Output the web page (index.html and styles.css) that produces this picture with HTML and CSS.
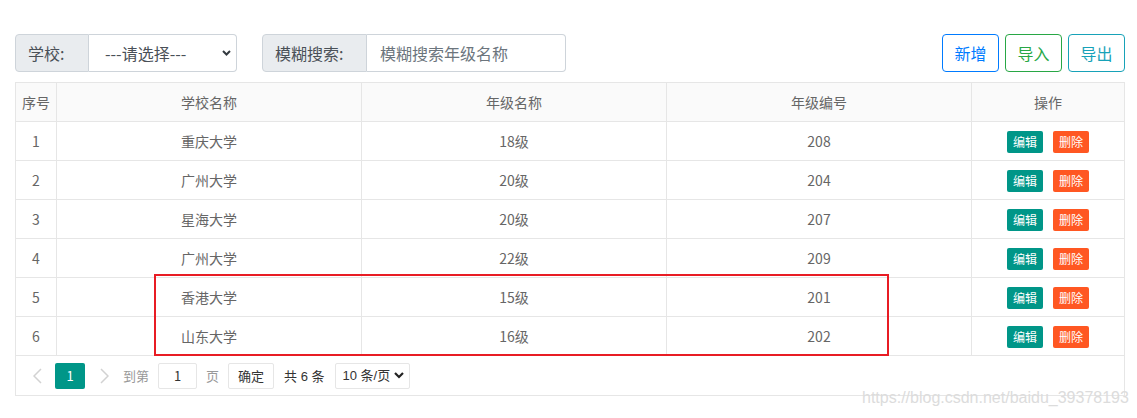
FILE: index.html
```html
<!DOCTYPE html>
<html lang="zh">
<head>
    <meta charset="utf-8" />
    <title>年级管理</title>
    <link rel="stylesheet" href="styles.css">
</head>
<body>
    <div id="page">
        <div class="toolbar">
            <div class="group">
                <span class="addon school">学校:</span>
                <div class="picker">
                    <span>---请选择---</span>
                    <svg width="9" height="6" viewBox="0 0 9 6"><path d="M1 1l3.5 3.5L8 1" fill="none" stroke="#343a40" stroke-width="2"/></svg>
                </div>
            </div>
            <div class="group">
                <span class="addon fuzzy">模糊搜索:</span>
                <input class="search" type="text" placeholder="模糊搜索年级名称">
            </div>
            <div class="spacer"></div>
            <button class="btn blue">新增</button>
            <button class="btn green">导入</button>
            <button class="btn cyan">导出</button>
        </div>

        <div class="grid">
            <table>
                <thead>
                    <tr><th class="c1">序号</th><th class="c2">学校名称</th><th class="c2">年级名称</th><th class="c2">年级编号</th><th>操作</th></tr>
                </thead>
                <tbody>
                    <tr><td>1</td><td>重庆大学</td><td>18级</td><td>208</td><td><span class="ed">编辑</span><span class="del">删除</span></td></tr>
                    <tr><td>2</td><td>广州大学</td><td>20级</td><td>204</td><td><span class="ed">编辑</span><span class="del">删除</span></td></tr>
                    <tr><td>3</td><td>星海大学</td><td>20级</td><td>207</td><td><span class="ed">编辑</span><span class="del">删除</span></td></tr>
                    <tr><td>4</td><td>广州大学</td><td>22级</td><td>209</td><td><span class="ed">编辑</span><span class="del">删除</span></td></tr>
                    <tr><td>5</td><td>香港大学</td><td>15级</td><td>201</td><td><span class="ed">编辑</span><span class="del">删除</span></td></tr>
                    <tr><td>6</td><td>山东大学</td><td>16级</td><td>202</td><td><span class="ed">编辑</span><span class="del">删除</span></td></tr>
                </tbody>
            </table>
            <div class="pager">
                <svg class="arrow" width="9" height="16" viewBox="0 0 9 16"><path d="M8 1L1 8l7 7" fill="none" stroke="#d2d2d2" stroke-width="1.5"/></svg>
                <span class="cur">1</span>
                <svg class="arrow" width="9" height="16" viewBox="0 0 9 16"><path d="M1 1l7 7-7 7" fill="none" stroke="#d2d2d2" stroke-width="1.5"/></svg>
                <span class="muted goto">到第</span>
                <span class="box num">1</span>
                <span class="muted unit">页</span>
                <span class="box ok">确定</span>
                <span class="count">共 6 条</span>
                <span class="box limit">10 条/页
                    <svg width="10" height="7" viewBox="0 0 10 7"><path d="M1 1l4 4 4-4" fill="none" stroke="#222" stroke-width="2.2"/></svg>
                </span>
            </div>
        </div>

        <div class="mark"></div>
        <div class="watermark">https://blog.csdn.net/baidu_39378193</div>
    </div>
</body>
</html>
```

FILE: styles.css
```css
html, body {
    margin: 0;
    height: 418px;
    overflow: hidden;
}
body {
    font-family: "Noto Sans CJK SC", sans-serif;
    color: #666;
    background: #fff;
}
#page {
    position: relative;
    width: 1110px;
    height: 384px;
    padding: 34px 12px 0 15px;
}
.toolbar {
    display: flex;
    height: 38px;
    margin-bottom: 10px;
}
.group {
    display: flex;
    height: 38px;
    margin-right: 25px;
}
.addon {
    display: flex;
    align-items: center;
    box-sizing: border-box;
    height: 38px;
    padding-left: 12px;
    background: #e9ecef;
    border: 1px solid #ced4da;
    border-radius: 4px 0 0 4px;
    color: #495057;
    font-size: 16px;
}
.school { width: 74px; }
.fuzzy { width: 105px; }
.picker {
    display: flex;
    align-items: center;
    justify-content: space-between;
    box-sizing: border-box;
    width: 148px;
    height: 38px;
    padding: 0 5px 0 16px;
    border: 1px solid #ced4da;
    border-left: 0;
    border-radius: 0 4px 4px 0;
    color: #495057;
    font-size: 16px;
}
.search {
    box-sizing: border-box;
    width: 199px;
    height: 38px;
    padding: 0 13px;
    border: 1px solid #ced4da;
    border-left: 0;
    border-radius: 0 4px 4px 0;
    font-family: inherit;
    font-size: 16px;
    outline: none;
}
.search::placeholder { color: #6c757d; }
.spacer { flex: 1; }
.btn {
    box-sizing: border-box;
    width: 57px;
    height: 38px;
    margin-left: 6px;
    background: #fff;
    border: 1px solid;
    border-radius: 4px;
    font-family: inherit;
    font-size: 16px;
    padding: 0;
}
.blue { color: #007bff; border-color: #007bff; }
.green { color: #28a745; border-color: #28a745; }
.cyan { color: #17a2b8; border-color: #17a2b8; }

.grid {
    border: 1px solid #e6e6e6;
}
table {
    width: 100%;
    border-collapse: collapse;
    table-layout: fixed;
    font-size: 14px;
}
th, td {
    height: 38px;
    padding: 0;
    border: 1px solid #e6e6e6;
    text-align: center;
    font-weight: normal;
    color: #666;
}
tr > :first-child { border-left: 0; }
tr > :last-child { border-right: 0; }
thead th { border-top: 0; background: #fafafa; }
th.c1 { width: 40px; }
th.c2 { width: 304px; }
.ed, .del {
    display: inline-block;
    width: 36px;
    height: 22px;
    line-height: 22px;
    color: #fff;
    font-size: 12px;
    border-radius: 2px;
    vertical-align: middle;
}
.ed { background: #009688; }
.del { background: #ff5722; margin-left: 10px; }

.pager {
    display: flex;
    align-items: center;
    height: 39px;
    padding-left: 17px;
    font-size: 13px;
    color: #666;
}
.arrow { margin-right: 13px; }
.cur {
    width: 30px;
    height: 26px;
    line-height: 26px;
    margin-right: 15px;
    text-align: center;
    background: #009688;
    color: #fff;
    border-radius: 2px;
}
.muted { color: #999; }
.goto { margin: 0 9px 0 1px; }
.unit { margin: 0 9px 0 9px; }
.box {
    box-sizing: border-box;
    height: 26px;
    line-height: 24px;
    border: 1px solid #e6e6e6;
    border-radius: 2px;
    color: #333;
}
.num { width: 39px; text-align: center; }
.ok { width: 46px; text-align: center; }
.count { margin: 0 10px; color: #333; font-family: "Liberation Sans", "Noto Sans CJK SC", sans-serif; }
.limit {
    display: flex;
    align-items: center;
    justify-content: space-between;
    width: 75px;
    padding: 0 5px 0 7px;
    font-family: "Liberation Sans", "Noto Sans CJK SC", sans-serif;
    font-size: 13px;
}

.mark {
    position: absolute;
    left: 154px;
    top: 274px;
    width: 731px;
    height: 78px;
    border: 2px solid #e81c24;
}
.watermark {
    position: absolute;
    left: 862px;
    top: 389px;
    font-family: "Liberation Sans", sans-serif;
    font-size: 16px;
    color: #dcdcdc;
    white-space: nowrap;
}
```
